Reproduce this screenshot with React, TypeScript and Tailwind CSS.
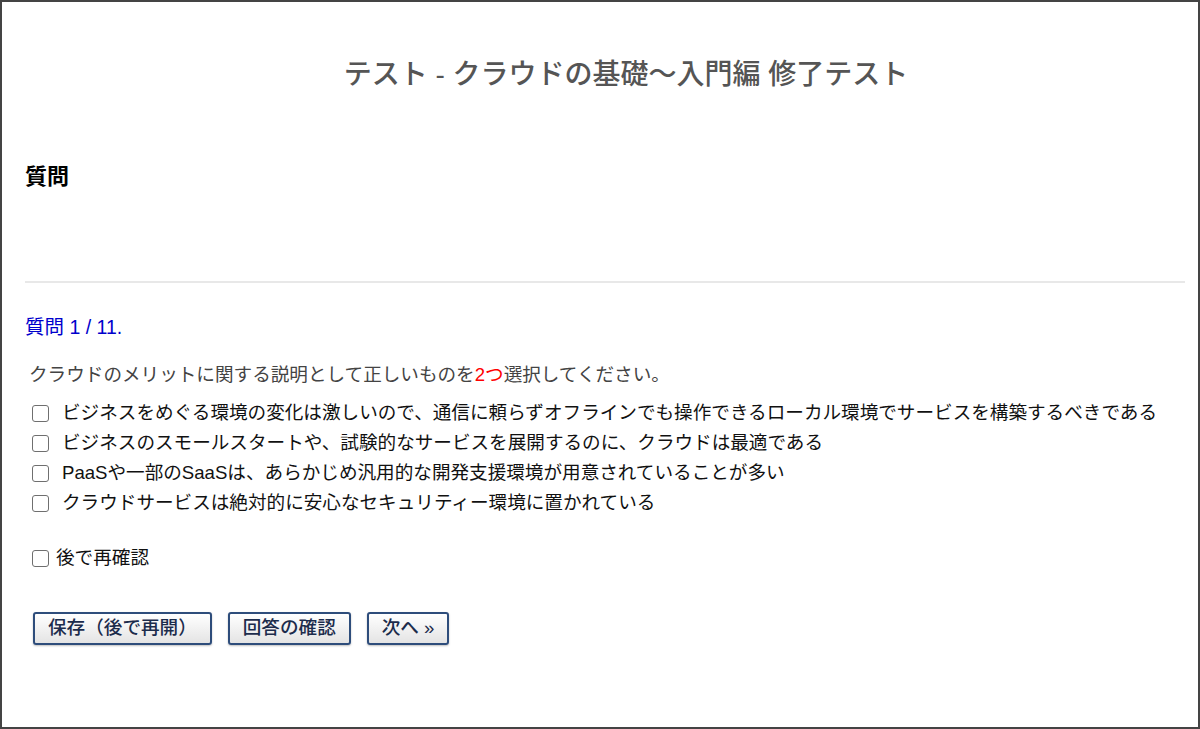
const OPTIONS = [
  'ビジネスをめぐる環境の変化は激しいので、通信に頼らずオフラインでも操作できるローカル環境でサービスを構築するべきである',
  'ビジネスのスモールスタートや、試験的なサービスを展開するのに、クラウドは最適である',
  'PaaSや一部のSaaSは、あらかじめ汎用的な開発支援環境が用意されていることが多い',
  'クラウドサービスは絶対的に安心なセキュリティー環境に置かれている',
];

const BUTTONS = ['保存（後で再開）', '回答の確認', '次へ »'];

function Box() {
  return (
    <span className="block w-[17px] h-[17px] shrink-0 rounded-[3px] border-[1.5px] border-[#6f6f6f] bg-white" />
  );
}

export default function App() {
  return (
    <div
      className="w-[1200px] h-[729px] bg-white border-2 border-[#444] overflow-hidden"
      style={{ fontFamily: '"Liberation Sans", "Noto Sans CJK JP", sans-serif' }}
    >
      <div className="px-[23px]">
        <h1 className="pt-[53px] pl-[52px] h-[93px] leading-[40px] text-center text-[28px] font-medium text-[#555]">
          テスト - クラウドの基礎〜入門編 修了テスト
        </h1>

        <h2 className="mt-[67px] leading-[30px] text-[22px] font-bold text-black">質問</h2>

        <div className="mt-[89px] border-t-2 border-[#e8e8e8] w-[1160px]" />

        <div className="mt-[30px] leading-[28px] text-[19.5px] text-[#0000cc]">
          質問 1 / 11.
        </div>

        <p className="mt-[20px] pl-[4px] leading-[28px] text-[18.6px] text-[#444]">
          クラウドのメリットに関する説明として正しいものを<span className="text-[#ff0000]">2つ</span>選択してください。
        </p>

        <div className="mt-[9px] flex flex-col">
          {OPTIONS.map(opt => (
            <label key={opt} className="flex items-center gap-[13px] pl-[7px] h-[30px] text-[18.6px] text-[#111]">
              <Box />
              <span className="whitespace-nowrap">{opt}</span>
            </label>
          ))}
        </div>

        <label className="mt-[25px] flex items-center gap-[7px] pl-[7px] h-[30px] text-[18.6px] text-[#111]">
          <Box />
          <span>後で再確認</span>
        </label>

        <div className="mt-[39px] flex gap-[16px] pl-[8px]">
          {BUTTONS.map(b => (
            <button
              key={b}
              className="h-[33px] px-[13px] rounded-[3px] border-2 border-[#2e4d7b] bg-gradient-to-b from-white to-[#e4e4e4] shadow-[0_1px_2px_rgba(0,0,0,0.25)] text-[18.6px] font-medium text-[#1c2c4c] leading-none"
            >
              {b}
            </button>
          ))}
        </div>
      </div>
    </div>
  );
}
